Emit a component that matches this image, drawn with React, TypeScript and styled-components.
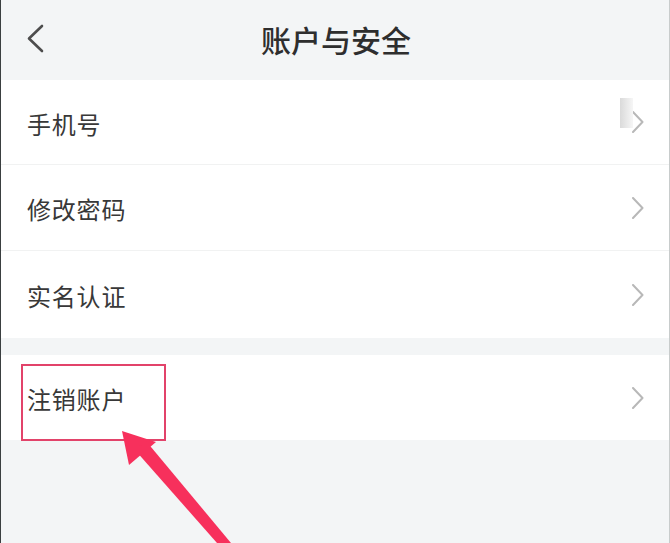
import React from "react";
import styled, { createGlobalStyle } from "styled-components";

const GlobalStyle = createGlobalStyle`
  html, body {
    margin: 0;
    padding: 0;
    background: #f3f5f6;
  }
  body {
    font-family: "Noto Sans CJK SC", "Noto Sans", sans-serif;
  }
`;

const Page = styled.div`
  position: relative;
  width: 670px;
  height: 543px;
  box-sizing: border-box;
  background: #f3f5f6;
  border-left: 1px solid #3a3f40;
  border-right: 1px solid #c8cccc;
  overflow: hidden;
`;

const Header = styled.div`
  height: 80px;
  display: flex;
  align-items: center;
  justify-content: center;
  position: relative;
`;

const BackButton = styled.div`
  position: absolute;
  left: 25px;
  top: 24px;
  width: 18px;
  height: 30px;
  display: flex;
`;

const Title = styled.h1`
  margin: 0 0 2px 2px;
  font-size: 30px;
  font-weight: 500;
  color: #2e2e2e;
  letter-spacing: 0px;
`;

const Group = styled.div`
  background: #ffffff;
  display: flex;
  flex-direction: column;
  margin-bottom: ${(p: { $gap?: number }) => p.$gap ?? 0}px;
`;

const Row = styled.div<{ $last?: boolean; $height: number }>`
  box-sizing: border-box;
  height: ${(p) => p.$height}px;
  display: flex;
  align-items: center;
  justify-content: space-between;
  padding: 0 25px 0 26px;
  border-bottom: ${(p) => (p.$last ? "none" : "1px solid #f1f2f2")};
  position: relative;
`;

const Label = styled.span`
  font-size: 24px;
  color: #383838;
  letter-spacing: 0.8px;
  margin-top: 2px;
`;

const Glare = styled.div`
  position: absolute;
  right: 36px;
  top: 18px;
  width: 13px;
  height: 30px;
  background: linear-gradient(90deg, #dadada, #f6f6f6);
`;

const Annotation = styled.svg`
  position: absolute;
  left: 0;
  top: 0;
  pointer-events: none;
`;

const Chevron = ({ color, w, h }: { color: string; w: number; h: number }) => (
  <svg width={w} height={h} viewBox={`0 0 ${w} ${h}`} fill="none">
    <polyline
      points={`1,1 ${w - 1.5},${h / 2} 1,${h - 1}`}
      stroke={color}
      strokeWidth="2"
      strokeLinecap="round"
      strokeLinejoin="round"
    />
  </svg>
);

const BackArrow = () => (
  <svg width="18" height="30" viewBox="0 0 18 30" fill="none">
    <polyline
      points="16,2 3,14.5 16,27"
      stroke="#4d4d4d"
      strokeWidth="2.6"
      strokeLinecap="round"
      strokeLinejoin="round"
    />
  </svg>
);

const items = [
  { label: "手机号", height: 85 },
  { label: "修改密码", height: 86 },
  { label: "实名认证", height: 87 },
];

const App = () => {
  return (
    <>
      <GlobalStyle />
      <Page>
        <Header>
          <BackButton>
            <BackArrow />
          </BackButton>
          <Title>账户与安全</Title>
        </Header>
        <Group $gap={17}>
          {items.map((it, i) => (
            <Row key={it.label} $height={it.height} $last={i === items.length - 1}>
              <Label>{it.label}</Label>
              {i === 0 && <Glare />}
              <Chevron color="#b8b8b8" w={12} h={22} />
            </Row>
          ))}
        </Group>
        <Group>
          <Row $height={85} $last>
            <Label>注销账户</Label>
            <Chevron color="#b8b8b8" w={12} h={22} />
          </Row>
        </Group>
        <Annotation width="670" height="543" viewBox="0 0 670 543">
          <rect x="21" y="365" width="143" height="75" fill="none" stroke="#e2436a" strokeWidth="2" />
          <polygon points="121,431 128,465 155,442" fill="#f7305c" />
          <polygon points="134,450 145,441 230,543 216,543" fill="#f7305c" />
        </Annotation>
      </Page>
    </>
  );
};

export default App;
